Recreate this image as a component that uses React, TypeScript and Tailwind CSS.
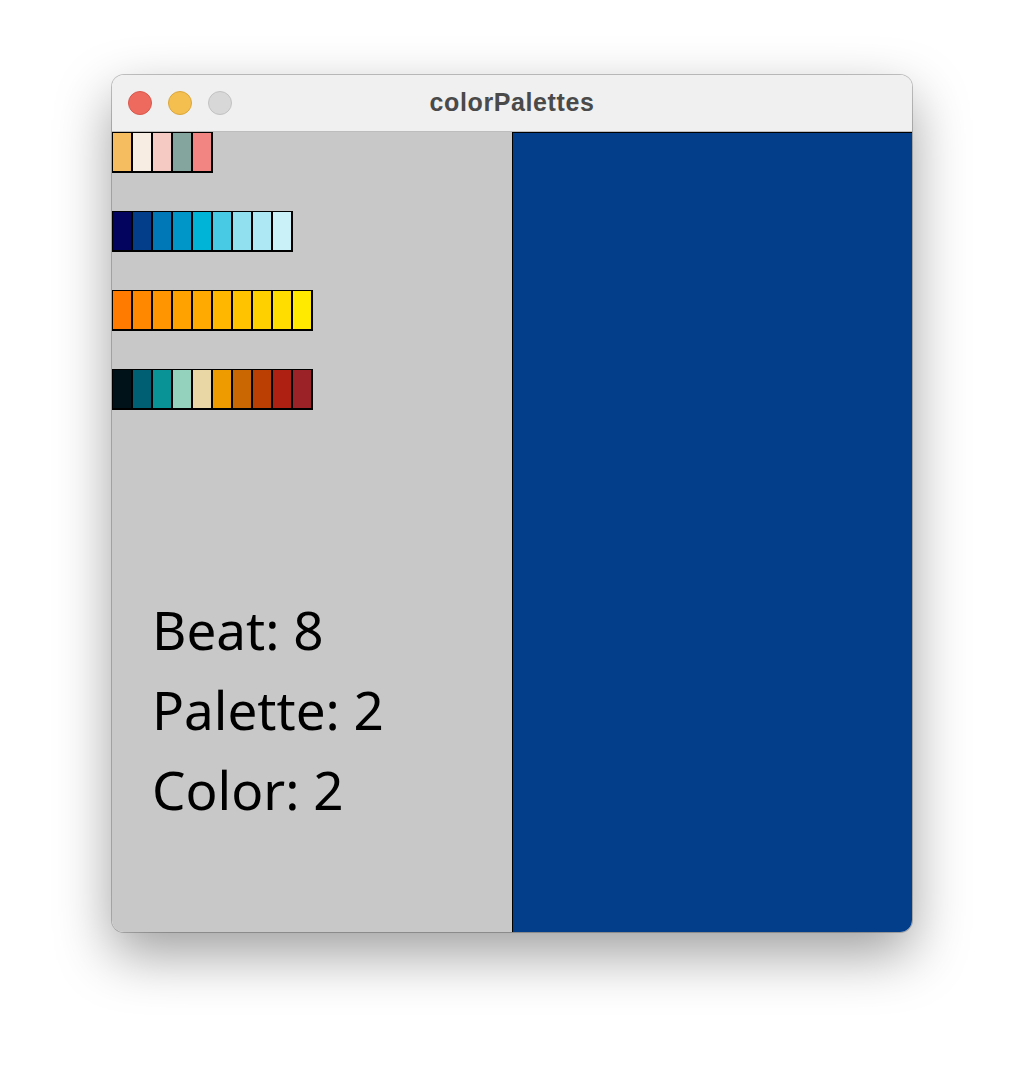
const palettes: string[][] = [
  ["#f6bd60", "#f7ede2", "#f5cac3", "#84a59d", "#f28482"],
  ["#03045e", "#023e8a", "#0077b6", "#0096c7", "#00b4d8", "#48cae4", "#90e0ef", "#ade8f4", "#caf0f8"],
  ["#ff7b00", "#ff8800", "#ff9500", "#ffa200", "#ffaa00", "#ffb700", "#ffc300", "#ffd000", "#ffdd00", "#ffea00"],
  ["#001219", "#005f73", "#0a9396", "#94d2bd", "#e9d8a6", "#ee9b00", "#ca6702", "#bb3e03", "#ae2012", "#9b2226"],
];

export default function App() {
  return (
    <div className="w-[1024px] h-[1080px] bg-white pt-[75px] pl-[112px]">
      <div className="w-[800px] rounded-[12px] overflow-hidden shadow-[0_0_0_1px_rgba(0,0,0,0.22),0_22px_55px_rgba(0,0,0,0.38)]">
        {/* title bar */}
        <div className="relative h-[56px] bg-[#f0f0f0] flex items-center justify-center">
          <div className="absolute left-[16px] top-[16px] flex gap-[16px]">
            <span className="w-[24px] h-[24px] rounded-full bg-[#ee6a5f] border border-[#d9574c]" />
            <span className="w-[24px] h-[24px] rounded-full bg-[#f5bf4f] border border-[#dba73c]" />
            <span className="w-[24px] h-[24px] rounded-full bg-[#d8d8d8] border border-[#c2c2c2]" />
          </div>
          <span
            className="text-[25px] font-bold text-[#4a4a4a] tracking-[0.6px]"
            style={{ fontFamily: "'Liberation Sans', Arial, sans-serif" }}
          >
            colorPalettes
          </span>
        </div>
        <div className="h-[1px] bg-[#bdbdbd]" />

        {/* sketch canvas */}
        <div className="flex h-[800px]">
          <div className="w-[400px] bg-[#c8c8c8] flex flex-col">
            <div className="flex flex-col gap-[38px]">
              {palettes.map((p, i) => (
                <div key={i} className="flex w-fit gap-[2px] bg-black pl-[1px] pt-[1px] pr-[2px] pb-[2px]">
                  {p.map((c) => (
                    <div key={c} className="w-[18px] h-[38px]" style={{ backgroundColor: c }} />
                  ))}
                </div>
              ))}
            </div>
            <div
              className="mt-[180px] pl-[40px] text-[53px] leading-[80px] text-black"
              style={{ fontFamily: "'Noto Sans', sans-serif" }}
            >
              <div>Beat: 8</div>
              <div>Palette: 2</div>
              <div>Color: 2</div>
            </div>
          </div>
          <div className="w-[400px] bg-[#023e8a] border-l border-t border-black" />
        </div>
      </div>
    </div>
  );
}
